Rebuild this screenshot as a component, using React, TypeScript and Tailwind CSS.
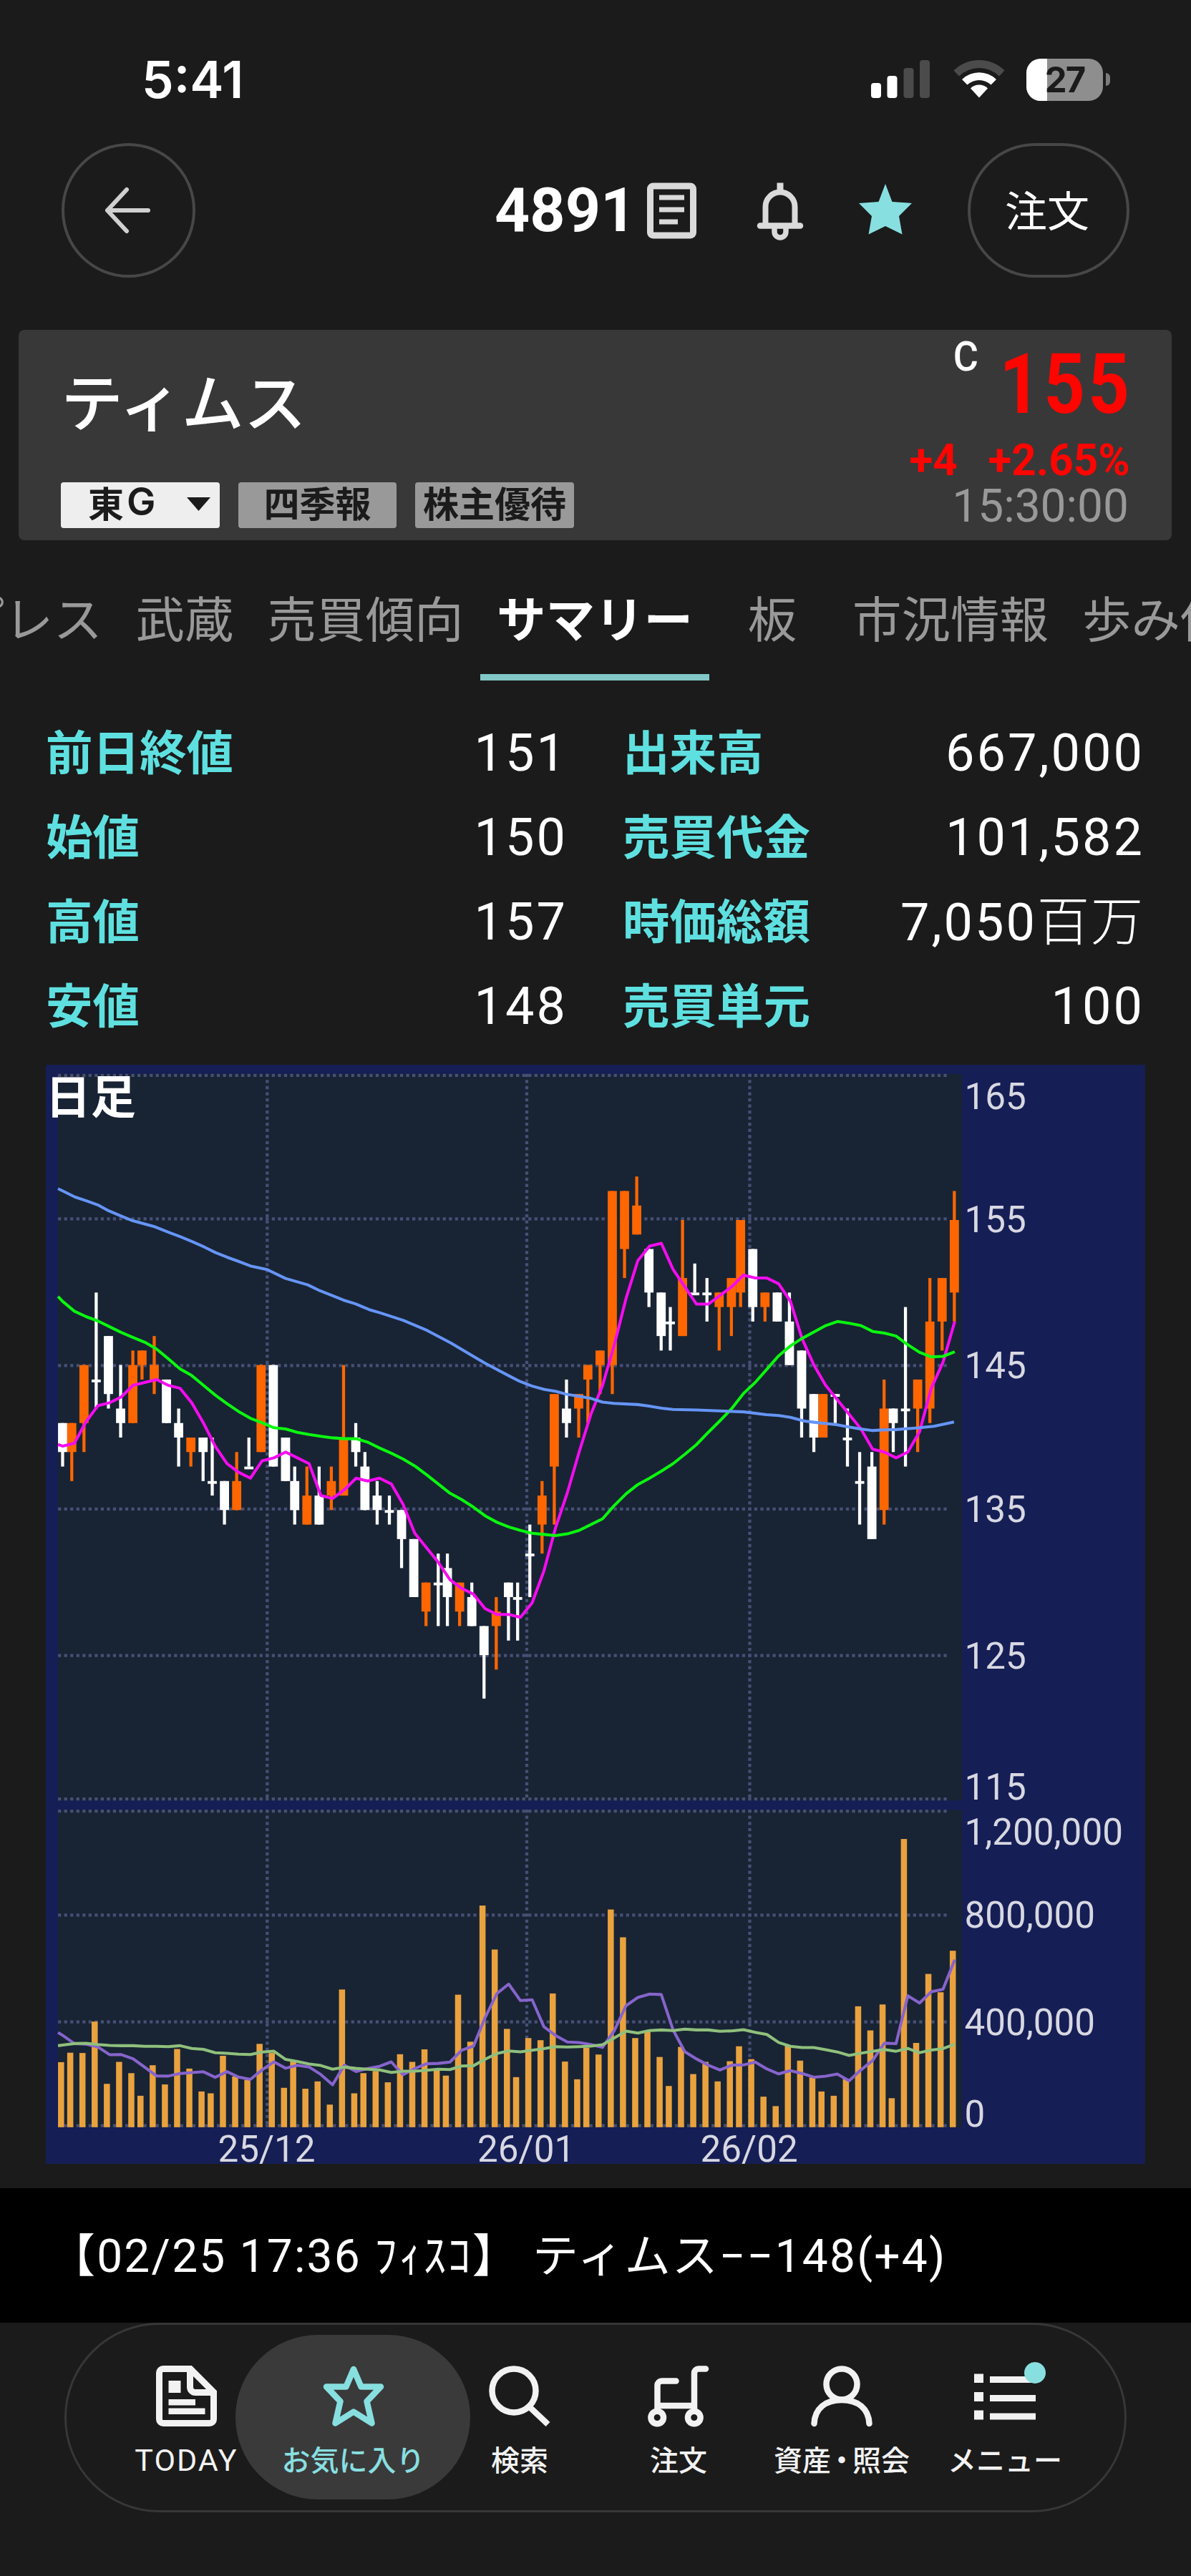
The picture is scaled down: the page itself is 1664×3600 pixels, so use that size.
import React from 'react';

// [direction, top, bottom, high, low] of each daily candle, 'u' closes at the top, 'd' at the bottom
type Candle = ['u' | 'd', number, number, number, number];

const candles: Candle[] = [
  ['d', 141, 139, 141, 138], ['u', 141, 139, 141, 137], ['u', 145, 141, 145, 139], ['d', 144, 144, 150, 142],
  ['d', 147, 143, 147, 142], ['d', 142, 141, 145, 140], ['u', 145, 141, 146, 141], ['u', 146, 145, 146, 144],
  ['u', 145, 144, 147, 143], ['d', 144, 141, 144, 141], ['d', 141, 140, 142, 138], ['u', 140, 139, 140, 138],
  ['d', 140, 139, 140, 137], ['d', 137, 137, 140, 136], ['d', 137, 135, 137, 134], ['u', 137, 135, 139, 135],
  ['d', 138, 138, 140, 138], ['u', 145, 139, 145, 139], ['d', 145, 138, 145, 138], ['d', 140, 137, 140, 137],
  ['d', 137, 135, 138, 134], ['u', 136, 134, 138, 134], ['d', 136, 134, 138, 134], ['u', 137, 136, 138, 135],
  ['u', 140, 136, 145, 136], ['d', 140, 139, 141, 138], ['d', 138, 135, 139, 135], ['d', 136, 135, 137, 134],
  ['d', 135, 135, 136, 134], ['d', 135, 133, 135, 131], ['d', 133, 129, 133, 129], ['u', 130, 128, 130, 127],
  ['d', 130, 130, 132, 127], ['d', 131, 129, 132, 127], ['u', 130, 128, 130, 127], ['d', 129, 127, 130, 127],
  ['d', 127, 125, 127, 122], ['u', 128, 127, 129, 124], ['d', 130, 129, 130, 126], ['d', 129, 129, 130, 126],
  ['d', 132, 132, 134, 129], ['u', 136, 134, 137, 132], ['u', 143, 138, 143, 134], ['d', 142, 141, 144, 140],
  ['u', 143, 142, 143, 140], ['u', 145, 144, 145, 141], ['u', 146, 145, 146, 143], ['u', 157, 145, 157, 143],
  ['u', 157, 153, 157, 151], ['u', 156, 154, 158, 154], ['d', 153, 150, 153, 149], ['d', 150, 147, 150, 146],
  ['d', 148, 148, 149, 146], ['u', 151, 147, 155, 147], ['d', 150, 150, 152, 150], ['d', 150, 150, 151, 148],
  ['u', 150, 149, 150, 146], ['u', 151, 149, 151, 147], ['u', 155, 150, 155, 149], ['d', 153, 149, 153, 148],
  ['u', 150, 149, 150, 148], ['d', 150, 148, 150, 148], ['d', 148, 145, 150, 145], ['d', 146, 142, 146, 140],
  ['d', 143, 140, 143, 139], ['u', 143, 140, 143, 140], ['d', 143, 143, 143, 141], ['d', 140, 140, 142, 138],
  ['d', 137, 137, 139, 134], ['d', 138, 133, 139, 133], ['u', 142, 135, 144, 134], ['d', 142, 141, 142, 139],
  ['d', 142, 142, 149, 138], ['u', 144, 142, 144, 139], ['u', 148, 142, 151, 141], ['u', 151, 148, 151, 146],
  ['u', 155, 150, 157, 148],
];

// bar heights in chart units
const volumes = [
  21.3, 24.4, 24.3, 34.6, 14.2, 21.4, 17.7, 10.3, 20.3, 14, 25.6, 19.2, 11.7, 11.1, 23.4, 16.6, 15.5, 27.3, 24.3, 12.9,
  21.5, 12.6, 15, 7.4, 45.1, 11.1, 17.7, 18.4, 14.7, 23.9, 21.4, 25.5, 19, 16.9, 43.4, 28, 72.6, 58.2, 32.2, 16.4,
  29.2, 28.5, 43.8, 21.5, 15.7, 26, 23.8, 71.3, 62.2, 29.2, 31.6, 23, 13.5, 26.3, 17.4, 21.4, 15, 21.6, 26.5, 22.3,
  10, 6.9, 26.9, 21.8, 16.3, 11.7, 10.3, 15.8, 39.6, 31.7, 40.2, 9.5, 94.4, 27.6, 50.2, 44.2, 57.8,
];

// averages of the days whose window starts before the chart does
const priceLead5 = [124.9, 124, 116.9, 111.7];
const priceLead25 = [
  77.5, 80.7, 82.5, 83.9, 85.8, 87.7, 89.3, 90.9, 93.1, 96.3, 99.6, 101.8, 105, 108.2, 111, 113.6, 115.8, 117.3, 118.9,
  119.3, 120.4, 121.1, 121.7, 122.2,
];
const volumeLead5 = [30.1, 27.4, 27.2, 26.3];
const volumeLead25 = [
  26.9, 27.4, 27.5, 27.1, 26.8, 26.7, 26.7, 26.5, 26.5, 26.4, 26.7, 25.8, 25.5, 24.4, 24.2, 23.9, 23.8, 24.6, 24.9,
  22.2, 21.5, 20.7, 20.2, 19,
];

const longAverage =
  '4,40.6 5.5,41.3 9.5,43.3 13.1,44.5 17,45.9 20.5,47.8 24.5,49.5 28.5,51.1 35.8,53.1 40.5,55 43.8,56.2 47.9,57.9 51.9,59.7 55.5,61.5 59.5,63.1 63.1,64.4 67,65.9 72.5,67.1 78.5,70 85.8,72.1 89.7,74 97.5,77.1 101.4,78.3 105.9,80.2 109.6,81.3 117,83.7 124.8,87 132.6,91.1 140,95.5 143.9,97.8 151.5,101.8 155.2,103.7 159.1,105.2 163,106.3 167.1,107 170.4,107.9 174.5,108.6 178.2,109.2 182.3,110.5 186,110.9 193.8,111.3 197.5,111.8 201.7,112.5 205.4,112.9 213.2,113.1 220.6,113.4 228.6,113.7 235.9,114.6 240.1,114.9 243.8,115.5 248.5,116.7 251.6,117.1 258.9,117.9 262.6,118.6 266.8,119.3 270.8,119.8 274.6,119.6 278.4,119.5 282.2,119.2 286.1,118.9 290.8,118.4 297.4,117';

const STEP = 3.844;
const barX = (i: number) => Math.floor(4 + i * STEP);
const priceY = (price: number) => 98.36 + (145 - price) * 4.75;

function average(values: number[], days: number, lead: number[]) {
  return values.map((_, i) =>
    i < lead.length ? lead[i] : values.slice(i - days + 1, i + 1).reduce((sum, v) => sum + v, 0) / days,
  );
}

function toPoints(ys: number[], startY: number) {
  return `4,${startY} ` + ys.map((y, i) => `${(5.5 + i * STEP).toFixed(2)},${y.toFixed(2)}`).join(' ');
}

const closes = candles.map(([dir, top, bottom]) => priceY(dir === 'u' ? top : bottom));
const priceMa5 = toPoints(average(closes, 5, priceLead5), 124.4);
const priceMa25 = toPoints(average(closes, 25, priceLead25), 75.9);
const volumeMa5 = toPoints(average(volumes, 5, volumeLead5).map((h) => 348 - h), 317);
const volumeMa25 = toPoints(average(volumes, 25, volumeLead25).map((h) => 348 - h), 321.3);

const horizontalLines = [3.5, 50.5, 98.5, 145.5, 193.5, 240.5, 244.5, 278.5, 313.5, 347.5];
const months = [
  { x: 72.5, label: '25/12' },
  { x: 157.5, label: '26/01' },
  { x: 230.5, label: '26/02' },
];
const scale = [
  { y: 14.5, label: '165' },
  { y: 54.8, label: '155' },
  { y: 102.6, label: '145' },
  { y: 149.7, label: '135' },
  { y: 197.7, label: '125' },
  { y: 240.7, label: '115' },
  { y: 255.5, label: '1,200,000' },
  { y: 282.7, label: '800,000' },
  { y: 317.7, label: '400,000' },
  { y: 347.7, label: '0' },
];

function Chart() {
  return (
    <svg viewBox="0 0 360 360" className="block w-[1536px] h-[1536px] bg-[#161e56]">
      <rect x="4" y="3" width="296" height="238" fill="#182434" />
      <rect x="4" y="244" width="296" height="104" fill="#182434" />
      <g stroke="#465075" strokeWidth="1" strokeDasharray="1 1">
        {horizontalLines.map((y) => (
          <line key={y} x1="4" x2="296" y1={y} y2={y} />
        ))}
        {months.map((m) => (
          <React.Fragment key={m.x}>
            <line x1={m.x} x2={m.x} y1="3" y2="241" />
            <line x1={m.x} x2={m.x} y1="244" y2="348" />
          </React.Fragment>
        ))}
      </g>

      {candles.map(([dir, top, bottom, high, low], i) => (
        <g key={i} fill={dir === 'u' ? '#ff6600' : '#ffffff'}>
          <rect x={barX(i) + 1} y={priceY(high)} width="1" height={priceY(low) - priceY(high)} />
          <rect x={barX(i)} y={priceY(top)} width="3" height={Math.max(0.9, priceY(bottom) - priceY(top))} />
        </g>
      ))}
      {volumes.map((h, i) => (
        <rect key={i} x={barX(i)} y={348 - h} width="2" height={h} fill="#eaa23e" />
      ))}

      <g fill="none" strokeWidth="0.95" strokeLinejoin="round">
        <polyline points={priceMa5} stroke="#f50cf0" />
        <polyline points={priceMa25} stroke="#0af80e" />
        <polyline points={longAverage} stroke="#6695f8" />
        <polyline points={volumeMa5} stroke="#8764cc" />
        <polyline points={volumeMa25} stroke="#90c07c" />
      </g>

      <g className="font-[Roboto]" fontSize="12" fill="#d8d8e2">
        {scale.map((s) => (
          <text key={s.label} x="300.8" y={s.y}>{s.label}</text>
        ))}
        {months.map((m) => (
          <text key={m.label} x={m.x - 0.2} y="359.2" textAnchor="middle">{m.label}</text>
        ))}
      </g>
      <text x="-0.1" y="15.9" fontSize="14.8" fontWeight="700" fill="#fff">日足</text>
    </svg>
  );
}

const stats = [
  ['前日終値', '151', '出来高', '667,000'],
  ['始値', '150', '売買代金', '101,582'],
  ['高値', '157', '時価総額', '7,050百万'],
  ['安値', '148', '売買単元', '100'],
];

function StatusBar() {
  return (
    <div className="h-[60px] mt-[81px] pl-[198px] pr-[113px] flex items-center justify-between">
      <span className="font-[Inter] font-semibold text-[71px] leading-none">5:41</span>
      <div className="flex items-center">
        <svg width="84" height="56" viewBox="0 0 84 56" className="mr-[31px]">
          <rect x="0" y="33" width="14" height="21" rx="4" fill="#fff" />
          <rect x="22.5" y="23" width="14" height="31" rx="4" fill="#fff" />
          <rect x="45.5" y="12" width="14" height="42" rx="4" fill="#4b4b4b" />
          <rect x="68" y="1" width="14" height="53" rx="4" fill="#4b4b4b" />
        </svg>
        <svg width="72" height="54" viewBox="0 0 72 54" className="mr-[30px]">
          <path d="M0.5 14.5 A51 51 0 0 1 71.5 14.5 L64 22.5 A40 40 0 0 0 8 22.5 Z" fill="#4b4b4b" />
          <path d="M12 27 A34.5 34.5 0 0 1 60 27 L52.5 34.5 A24 24 0 0 0 19.5 34.5 Z" fill="#fff" />
          <path d="M24 39.5 A17 17 0 0 1 48 39.5 L36 52.5 Z" fill="#fff" />
        </svg>
        <div className="relative w-[107px] h-[59px] rounded-[20px] overflow-hidden bg-[#8e8e8e] flex items-center justify-center">
          <div className="absolute left-0 top-0 w-[29px] h-full bg-white" />
          <span className="relative font-[Inter] font-bold text-[49px] leading-none tracking-[-2px] text-[#1b1b1b]">27</span>
        </div>
        <div className="ml-[4px] w-[6px] h-[18px] rounded-r-full bg-[#7c7c7c]" />
      </div>
    </div>
  );
}

function Header() {
  return (
    <div className="mt-[59px] h-[188px] px-[86px] flex items-center">
      <button className="w-[187px] h-[188px] rounded-full border-4 border-[#474747] flex items-center justify-center">
        <svg width="68" height="68" viewBox="0 0 68 68" fill="none" stroke="#d0d0d0" strokeWidth="6" strokeLinecap="round" strokeLinejoin="round">
          <path d="M31 5 L4 34 L31 63 M4 34 H61" />
        </svg>
      </button>
      <span className="ml-[418px] w-[212px] font-[Roboto] font-bold text-[86px] leading-none">4891</span>
      <svg width="70" height="80" viewBox="0 0 70 80" fill="none" stroke="#dadada">
        <rect x="5.5" y="6" width="60" height="69" rx="4" strokeWidth="9" />
        <path d="M18 22 H53 M18 39 H53 M18 56 H44" strokeWidth="7" />
      </svg>
      <svg width="70" height="84" viewBox="0 0 70 84" className="ml-[82px] mt-[2px]" fill="none" stroke="#dadada">
        <path d="M14.5 62 V36 A20.5 20.5 0 0 1 55.5 36 V62" strokeWidth="8" />
        <path d="M35 2.5 V13" strokeWidth="9" />
        <path d="M7 62.5 H63" strokeWidth="8.5" strokeLinecap="round" />
        <path d="M27 65 V71 A8 8 0 0 0 43 71 V65" strokeWidth="7.5" />
      </svg>
      <svg width="74" height="71" viewBox="0 0 74 71" className="ml-[75px] mb-[4px]" fill="#88dfe0">
        <path d="M37 0 L46.5 25 L74 27 L56 45 L60.5 70.5 L37 59 L13.5 70.5 L18 45 L0 27 L27.5 25 Z" />
      </svg>
      <button className="ml-auto w-[226px] h-[188px] rounded-full border-4 border-[#474747] text-[59px] leading-none pb-[5px] pr-[4px]">
        注文
      </button>
    </div>
  );
}

function SummaryCard() {
  return (
    <div className="mt-[73px] ml-[26px] w-[1611px] h-[294px] rounded-lg bg-[#383838] pl-[59px] pr-[60px] flex justify-between">
      <div className="flex flex-col">
        <h1 className="mt-[52px] h-[90px] text-[87px] leading-[90px] font-medium">ティムス</h1>
        <div className="mt-[71px] flex gap-[26px] text-[50px] leading-[54px] font-bold text-[#1b1b1b]">
          <div className="w-[222px] h-[64px] rounded-[4px] bg-[#eeeeee] flex items-start pl-[38px]">
            東<span className="font-[Inter] font-semibold text-[54px] ml-[4px]">G</span>
            <svg width="33" height="19" viewBox="0 0 33 19" className="ml-auto mr-[13px] mt-[21px]">
              <path d="M0 0 H33 L16.5 19 Z" fill="#1b1b1b" />
            </svg>
          </div>
          <div className="w-[221px] h-[64px] rounded-[4px] bg-[#999999] text-center">四季報</div>
          <div className="w-[222px] h-[64px] rounded-[4px] bg-[#999999] text-center">株主優待</div>
        </div>
      </div>
      <div className="flex flex-col items-end font-[Roboto]">
        <div className="flex items-start">
          <span className="mt-[7px] -mr-[1px] text-[58px] leading-[60px] font-medium origin-right scale-x-[0.93]">C</span>
          <span className="mt-[16px] text-[117px] leading-[120px] font-bold text-[#ff0500] tracking-[5px] -mr-[5px] origin-right scale-x-[0.86]">
            155
          </span>
        </div>
        <div className="mt-[15px] -mr-[2px] flex gap-[44px] text-[62px] leading-[62px] font-bold text-[#ff0500] origin-right scale-x-[0.97]">
          <span>+4</span>
          <span>+2.65%</span>
        </div>
        <span className="text-[64px] leading-[68px] text-[#999999]">15:30:00</span>
      </div>
    </div>
  );
}

function Tabs() {
  return (
    <div className="mt-[32px] h-[164px] w-full overflow-hidden flex *:shrink-0 text-[68.5px] leading-[150px] text-[#999999] whitespace-nowrap">
      <div className="w-[166px] flex justify-end pr-[23px]">
        <span>プレス</span>
      </div>
      <div className="w-[184px] text-center">武蔵</div>
      <div className="w-[321px] text-center">売買傾向</div>
      <div className="w-[320px] text-center font-bold text-white border-b-[9px] border-[#82c8c8]">サマリー</div>
      <div className="w-[176px] text-center">板</div>
      <div className="w-[322px] text-center">市況情報</div>
      <div className="pl-[23px]">歩み値</div>
    </div>
  );
}

function Stats() {
  return (
    <div className="mt-[41px] ml-[64px] w-[1535px]">
      {stats.map(([leftLabel, leftValue, rightLabel, rightValue]) => (
        <div key={leftLabel} className="h-[118px] flex items-center text-[72px] leading-none">
          <span className="w-[350px] pb-[7px] text-[65.5px] font-bold text-[#5fe0e0]">{leftLabel}</span>
          <span className="w-[379px] pt-[4px] text-right font-[Roboto] tracking-[3px]">{leftValue}</span>
          <span className="ml-[77px] w-[300px] pb-[7px] text-[65.5px] font-bold text-[#5fe0e0]">{rightLabel}</span>
          <span className="flex-1 pt-[4px] text-right whitespace-nowrap font-[Roboto,'Noto_Sans_CJK_JP'] tracking-[3px]">
            {rightValue.replace('百万', '')}
            {rightValue.endsWith('百万') && <span className="text-[73px] leading-none font-light tracking-[2px]">百万</span>}
          </span>
        </div>
      ))}
    </div>
  );
}

type NavItemProps = { label: React.ReactNode; width: string; active?: boolean; children: React.ReactNode };

function NavItem({ label, width, active, children }: NavItemProps) {
  return (
    <div className={`${width} flex flex-col items-center font-medium ${active ? 'text-[#88dfe0]' : 'text-[#f2f2f2]'}`}>
      <svg width="86" height="86" viewBox="0 0 86 86" fill="none" stroke="currentColor" className="overflow-visible">
        {children}
      </svg>
      <span className="mt-[19px] text-[40px] leading-[50px] whitespace-nowrap">{label}</span>
    </div>
  );
}

function BottomNav() {
  return (
    <div className="relative ml-[90px] w-[1484px] h-[265px] rounded-full border-[3px] border-[#373737] pl-[51px] pt-[57px] flex">
      <div className="absolute left-[236px] top-[14px] w-[328px] h-[230px] rounded-full bg-[#3a3a3a]" />
      <div className="relative flex">
        <NavItem label={<span className="font-[Roboto] font-normal text-[43px] tracking-[2px]">TODAY</span>} width="w-[233px]">
          <path d="M10 4.5 H48 L80.5 37 V75 A5.5 5.5 0 0 1 75 80.5 H10 A5.5 5.5 0 0 1 4.5 75 V10 A5.5 5.5 0 0 1 10 4.5 Z M47.5 5 V30 A7.5 7.5 0 0 0 55 37.5 H80" strokeWidth="9" />
          <path d="M17.5 21 H34.5 V38 H17.5 Z M17.5 47 H55 V55.5 H17.5 Z M17.5 59.5 H68.5 V68 H17.5 Z" fill="currentColor" stroke="none" />
        </NavItem>
        <NavItem label="お気に入り" width="w-[233px]" active>
          <path d="M43 5 L53.5 29.5 H81 L61.5 50 L68.5 80.5 L43 64.5 L17.5 80.5 L24.5 50 L5 29.5 H32.5 Z" strokeWidth="8.5" strokeLinejoin="round" />
        </NavItem>
        <NavItem label="検索" width="w-[232px]">
          <circle cx="35" cy="35" r="30.5" strokeWidth="8.5" />
          <path d="M56 57 L82.5 82" strokeWidth="8.5" />
        </NavItem>
        <NavItem label="注文" width="w-[212px]">
          <path d="M81 4.5 H71 A6 6 0 0 0 65 10.5 V60 M39.5 21.5 H19.5 A6 6 0 0 0 13.5 27.5 V60 M13.5 56 H65" strokeWidth="8.5" strokeLinecap="round" />
          <circle cx="13.2" cy="72.5" r="8.8" strokeWidth="8.5" />
          <circle cx="64.8" cy="72.5" r="8.8" strokeWidth="8.5" />
        </NavItem>
        <NavItem label={<>資産<span className="-mx-[5px]">・</span>照会</>} width="w-[244px]">
          <circle cx="43" cy="26" r="21.5" strokeWidth="8.5" />
          <path d="M4.5 81 C5.5 60 20 48 43 48 S80.5 60 81.5 81" strokeWidth="8.5" strokeLinecap="round" />
        </NavItem>
        <NavItem label="メニュー" width="w-[212px]">
          <path d="M0 11.5 H13 V24 H0 Z M0 37 H13 V50 H0 Z M0 62.5 H13 V75.5 H0 Z M22 15 H86 V24 H22 Z M22 41 H86 V50 H22 Z M22 66.5 H86 V75.5 H22 Z" fill="currentColor" stroke="none" />
          <circle cx="85" cy="10" r="15" fill="#88dfe0" stroke="none" />
        </NavItem>
      </div>
    </div>
  );
}

export default function App() {
  return (
    <div className="w-[1664px] h-[3600px] overflow-hidden flex flex-col bg-[#1b1b1b] text-white font-['Noto_Sans_CJK_JP',sans-serif]">
      <StatusBar />
      <Header />
      <SummaryCard />
      <Tabs />
      <Stats />
      <div className="mt-[24px] ml-[64px]">
        <Chart />
      </div>
      <div className="mt-[34px] h-[188px] shrink-0 bg-black pl-[69px] text-[64px] leading-[191px] tracking-[2.2px] whitespace-pre font-[Roboto,'Noto_Sans_CJK_JP',sans-serif]">
        【02/25 17:36 ﾌｨｽｺ】 ティムス−−148(+4)
      </div>
      <BottomNav />
    </div>
  );
}
